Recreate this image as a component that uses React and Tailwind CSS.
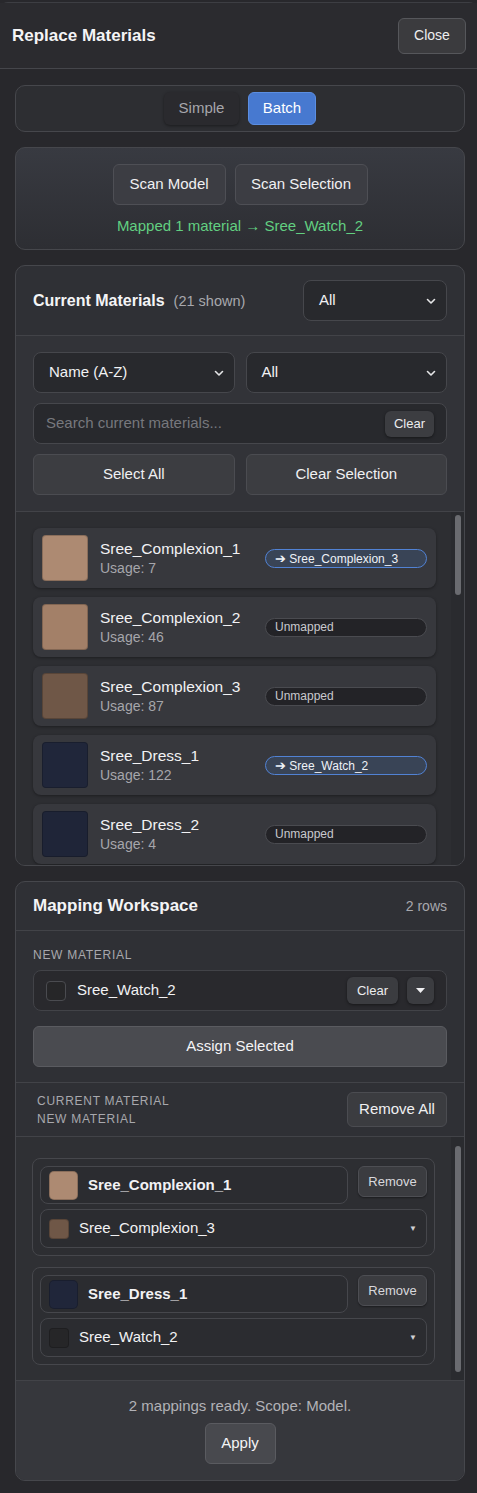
import React from 'react';

const materials = [
  { name: 'Sree_Complexion_1', usage: 7, color: '#ad8a72', mapped: 'Sree_Complexion_3' },
  { name: 'Sree_Complexion_2', usage: 46, color: '#a38068', mapped: null },
  { name: 'Sree_Complexion_3', usage: 87, color: '#6f5747', mapped: null },
  { name: 'Sree_Dress_1', usage: 122, color: '#20263a', mapped: 'Sree_Watch_2' },
  { name: 'Sree_Dress_2', usage: 4, color: '#1f2538', mapped: null },
];

const mappings = [
  { from: 'Sree_Complexion_1', fromColor: '#ad8a72', to: 'Sree_Complexion_3', toColor: '#6f5747' },
  { from: 'Sree_Dress_1', fromColor: '#20263a', to: 'Sree_Watch_2', toColor: '#262628' },
];

const Chevron = () => (
  <svg width="10" height="10" viewBox="0 0 10 10" fill="none">
    <path d="M1.5 3.5 5 7l3.5-3.5" stroke="#e5e5e7" strokeWidth="1.6" strokeLinecap="round" strokeLinejoin="round" />
  </svg>
);

const FakeSelect = ({ label, className = '' }) => (
  <div className={`flex items-center justify-between h-[41px] rounded-lg border border-[#46474c] bg-[#28292d] pl-[15px] pr-[10px] ${className}`}>
    <span className="text-[15px] text-[#f2f2f4]">{label}</span>
    <Chevron />
  </div>
);

const Scrollbar = ({ top, height }) => (
  <div className="w-[13px] shrink-0 bg-[#2a2b2f] pt-[3px]">
    <div className="mx-auto w-[6px] rounded-full bg-[#6a6b70]" style={{ marginTop: top, height }} />
  </div>
);

const MaterialRow = ({ m }) => (
  <div className="flex items-center h-[60px] shrink-0 rounded-lg bg-[#37383d] px-[9px] shadow-[0_1px_3px_rgba(0,0,0,0.35)]">
    <div className="w-[46px] h-[46px] rounded-[4px] border border-black/20 shrink-0" style={{ backgroundColor: m.color }} />
    <div className="flex-1 min-w-0 pl-[12px]">
      <div className="text-[15.5px] leading-[21px] text-[#f2f2f4]">{m.name}</div>
      <div className="text-[14px] leading-[19px] text-[#a6a6ab]">Usage: {m.usage}</div>
    </div>
    {m.mapped ? (
      <div className="w-[162px] h-[19px] shrink-0 rounded-full border border-[#5182d4] bg-[#394456] pl-[9px] text-[12px] leading-[17px] text-[#eef2f8]">
        <span className="text-[13px]">➔</span> {m.mapped}
      </div>
    ) : (
      <div className="w-[162px] h-[19px] shrink-0 rounded-full border border-[#4a4b50] bg-[#232327] pl-[9px] text-[12px] leading-[17px] text-[#c9c9ce]">
        Unmapped
      </div>
    )}
  </div>
);

const MappingCard = ({ m }) => (
  <div className="rounded-lg border border-[#46474c] bg-[#2d2e32] p-[7px] flex flex-col gap-[5px]">
    <div className="flex items-start gap-[10px]">
      <div className="flex-1 flex items-center h-[38px] rounded-lg border border-[#46474c] bg-[#2b2c30] pl-[8px]">
        <div className="w-[29px] h-[29px] rounded-[5px] border border-black/20" style={{ backgroundColor: m.fromColor }} />
        <span className="pl-[10px] text-[15px] font-bold text-[#f2f2f4]">{m.from}</span>
      </div>
      <button className="w-[69px] h-[31px] rounded-md border border-[#4d4e53] bg-[#3b3c40] text-[13px] text-[#d8d8dc] shadow-[0_1px_2px_rgba(0,0,0,0.4)]">
        Remove
      </button>
    </div>
    <div className="flex items-center h-[39px] rounded-lg border border-[#46474c] bg-[#2b2c30] pl-[8px] pr-[9px]">
      <div className="w-[20px] h-[20px] rounded-[4px] border border-black/20" style={{ backgroundColor: m.toColor }} />
      <span className="flex-1 pl-[10px] text-[15px] text-[#f2f2f4]">{m.to}</span>
      <span className="text-[8px] text-[#d0d0d4]">▼</span>
    </div>
  </div>
);

export default function App() {
  return (
    <div className="min-h-screen bg-[#28282c] pt-[2px] font-['Liberation_Sans',Arial,sans-serif] text-[#f2f2f4]">
      <div className="border-t border-[#3d3e43] rounded-t-lg">
        {/* Header */}
        <div className="flex items-center justify-between h-[66px] border-b border-[#45464b] bg-[#2b2b2f] pl-[12px] pr-[11px]">
          <h1 className="text-[17px] font-bold text-[#f4f4f6]">Replace Materials</h1>
          <button className="w-[68px] h-[36px] rounded-md border border-[#56575b] bg-[#3b3b3e] text-[14px] text-[#eeeeef]">
            Close
          </button>
        </div>

        <div className="flex flex-col gap-[15px] pl-[15px] pr-[12px] pt-[16px] pb-[12px]">
          {/* Mode toggle */}
          <div className="flex items-center justify-center gap-[9px] h-[47px] rounded-[10px] border border-[#46474c] bg-[#2d2e32]">
            <button className="w-[75px] h-[33px] rounded-md bg-[#2a2a2e] text-[15px] text-[#a6a6ab] shadow-[0_1px_3px_rgba(0,0,0,0.4)]">
              Simple
            </button>
            <button className="w-[68px] h-[33px] rounded-md border border-[#5b8ee2] bg-[#4779d0] text-[15px] text-white">
              Batch
            </button>
          </div>

          {/* Scan */}
          <div className="flex flex-col items-center h-[103px] rounded-[10px] border border-[#46474c] bg-gradient-to-b from-[#383a41] to-[#2d2e33] pt-[16px]">
            <div className="flex gap-[9px]">
              <button className="w-[113px] h-[41px] rounded-md border border-[#4e4f55] bg-[#3c3d43] text-[15px] text-[#f0f0f2]">
                Scan Model
              </button>
              <button className="w-[133px] h-[41px] rounded-md border border-[#4e4f55] bg-[#3c3d43] text-[15px] text-[#f0f0f2]">
                Scan Selection
              </button>
            </div>
            <p className="mt-[10px] text-[15px] text-[#62cf81]">Mapped 1 material → Sree_Watch_2</p>
          </div>

          {/* Current Materials */}
          <div className="rounded-[10px] border border-[#46474c] bg-[#2f3035] overflow-hidden">
            <div className="flex items-center justify-between h-[70px] border-b border-[#424348] pl-[17px] pr-[17px]">
              <div className="flex items-baseline gap-[9px]">
                <h2 className="text-[16px] font-bold text-[#f4f4f6]">Current Materials</h2>
                <span className="text-[14.5px] text-[#a8a8ad]">(21 shown)</span>
              </div>
              <FakeSelect label="All" className="w-[144px] h-[40px]" />
            </div>

            <div className="flex flex-col gap-[10px] bg-[#323338] px-[17px] pt-[16px] pb-[16px] border-b border-[#424348]">
              <div className="grid grid-cols-2 gap-[11px]">
                <FakeSelect label="Name (A-Z)" />
                <FakeSelect label="All" />
              </div>
              <div className="flex items-center justify-between h-[41px] rounded-lg border border-[#46474c] bg-[#28292d] pl-[12px] pr-[12px]">
                <span className="text-[15px] text-[#77787d]">Search current materials...</span>
                <button className="w-[49px] h-[26px] rounded-md bg-[#3c3d41] text-[13px] text-[#ececee] shadow-[0_1px_3px_rgba(0,0,0,0.45)]">
                  Clear
                </button>
              </div>
              <div className="grid grid-cols-2 gap-[11px]">
                <button className="h-[41px] rounded-md border border-[#4b4c51] bg-[#3c3d41] text-[15px] text-[#f0f0f2]">
                  Select All
                </button>
                <button className="h-[41px] rounded-md border border-[#4b4c51] bg-[#3c3d41] text-[15px] text-[#f0f0f2]">
                  Clear Selection
                </button>
              </div>
            </div>

            <div className="flex h-[353px] bg-[#2d2e32]">
              <div className="flex-1 overflow-hidden flex flex-col gap-[9px] pl-[17px] pr-[15px] pt-[16px]">
                {materials.map((m) => (
                  <MaterialRow key={m.name} m={m} />
                ))}
              </div>
              <Scrollbar top={0} height={80} />
            </div>
          </div>

          {/* Mapping Workspace */}
          <div className="rounded-[10px] border border-[#46474c] bg-[#2f3035] overflow-hidden">
            <div className="flex items-center justify-between h-[49px] border-b border-[#424348] px-[17px]">
              <h2 className="text-[17px] font-bold text-[#f4f4f6]">Mapping Workspace</h2>
              <span className="text-[14px] text-[#a8a8ad]">2 rows</span>
            </div>

            <div className="px-[17px] pt-[17px] pb-[15px] border-b border-[#424348]">
              <div className="text-[12px] tracking-[0.06em] text-[#a8a8ad] leading-[14px]">NEW MATERIAL</div>
              <div className="mt-[8px] flex items-center h-[41px] rounded-lg border border-[#424348] bg-[#29292d] pl-[12px] pr-[12px]">
                <div className="w-[20px] h-[20px] rounded-[4px] border border-[#4a4b50] bg-[#262628]" />
                <span className="flex-1 pl-[11px] text-[15px] text-[#f2f2f4]">Sree_Watch_2</span>
                <button className="w-[51px] h-[27px] rounded-md bg-[#3b3c40] text-[13px] text-[#ececee] shadow-[0_1px_3px_rgba(0,0,0,0.45)]">
                  Clear
                </button>
                <button className="ml-[9px] flex items-center justify-center w-[27px] h-[27px] rounded-md bg-[#3b3c40] shadow-[0_1px_3px_rgba(0,0,0,0.45)]">
                  <svg width="9" height="5" viewBox="0 0 9 5">
                    <path d="M0 0h9L4.5 5z" fill="#f0f0f2" />
                  </svg>
                </button>
              </div>
              <button className="mt-[15px] w-full h-[41px] rounded-md border border-[#5a5b60] bg-[#4a4b50] text-[15px] text-[#f4f4f6]">
                Assign Selected
              </button>
            </div>

            <div className="flex items-center justify-between h-[54px] border-b border-[#424348] pl-[21px] pr-[17px]">
              <div className="text-[12px] leading-[18px] tracking-[0.06em] text-[#a8a8ad]">
                <div>CURRENT MATERIAL</div>
                <div>NEW MATERIAL</div>
              </div>
              <button className="w-[100px] h-[35px] rounded-md border border-[#4b4c51] bg-[#3b3c40] text-[15px] text-[#f0f0f2]">
                Remove All
              </button>
            </div>

            <div className="flex h-[243px] bg-[#2f3034]">
              <div className="flex-1 overflow-hidden flex flex-col gap-[11px] pl-[16px] pr-[16px] pt-[21px]">
                {mappings.map((m) => (
                  <MappingCard key={m.from} m={m} />
                ))}
              </div>
              <Scrollbar top={6} height={226} />
            </div>

            <div className="flex flex-col items-center h-[100px] border-t border-[#424348] bg-[#36373c] pt-[14px]">
              <p className="text-[15px] text-[#b2b2b7]">2 mappings ready. Scope: Model.</p>
              <button className="mt-[5px] w-[71px] h-[41px] rounded-md border border-[#5a5b60] bg-[#48494e] text-[15px] text-[#f4f4f6]">
                Apply
              </button>
            </div>
          </div>
        </div>
      </div>
    </div>
  );
}
